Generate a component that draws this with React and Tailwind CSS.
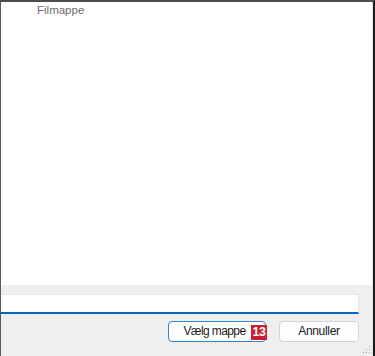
const font = { fontFamily: '"Liberation Sans", Arial, sans-serif' };

const ResizeGrip = () => (
  <svg width="10" height="10" viewBox="0 0 10 10" className="absolute right-[1px] bottom-[2px]">
    <rect x="8" y="2" width="1" height="1" fill="#a0a0a0" />
    <rect x="5" y="5" width="1" height="1" fill="#a0a0a0" />
    <rect x="8" y="5" width="1" height="1" fill="#a0a0a0" />
    <rect x="2" y="8" width="1" height="1" fill="#a0a0a0" />
    <rect x="5" y="8" width="1" height="1" fill="#a0a0a0" />
    <rect x="8" y="8" width="1" height="1" fill="#a0a0a0" />
  </svg>
);

export default function App() {
  return (
    <div
      className="w-[375px] h-[356px] flex flex-col bg-[#efefef] border-t-2 border-l border-t-[#4d4d4d] border-l-[#5a5a5a] border-r-2 border-r-[#1c1c1c] overflow-hidden"
      style={font}
    >
      {/* File list area */}
      <div className="flex-1 bg-white border-r border-r-[#e2e2e2]">
        <div className="pl-[36px] text-[11.5px] leading-[16px] text-[#6b6b6b]">Filmappe</div>
      </div>

      {/* Footer */}
      <div className="relative h-[71px] shrink-0 border-r border-r-[#e2e2e2] pt-[9px] pr-[13px]">
        <div className="h-[20px] bg-white border-t border-r border-[#e4e4e4] border-b-2 border-b-[#0067c0]" />

        <div className="flex justify-end gap-[13px] mt-[7px]">
          <button className="relative w-[98px] h-[21px] pb-[2px] pr-[5px] rounded-[4px] bg-white border border-[#2f86d0] text-[12px] leading-[16px] tracking-[-0.6px] text-[#1a1a1a]">
            Vælg mappe
            <span className="absolute right-[-2px] top-[3px] w-[16px] h-[15px] bg-[#c8202e] text-white text-[12.5px] leading-[15px] font-bold flex items-center justify-center tracking-[-0.5px]">
              13
            </span>
          </button>
          <button className="w-[80px] h-[21px] pb-[2px] rounded-[4px] bg-[#fdfdfd] border border-[#d3d3d3] text-[12px] leading-[16px] tracking-[-0.3px] text-[#1a1a1a]">
            Annuller
          </button>
        </div>

        <ResizeGrip />
      </div>
    </div>
  );
}
